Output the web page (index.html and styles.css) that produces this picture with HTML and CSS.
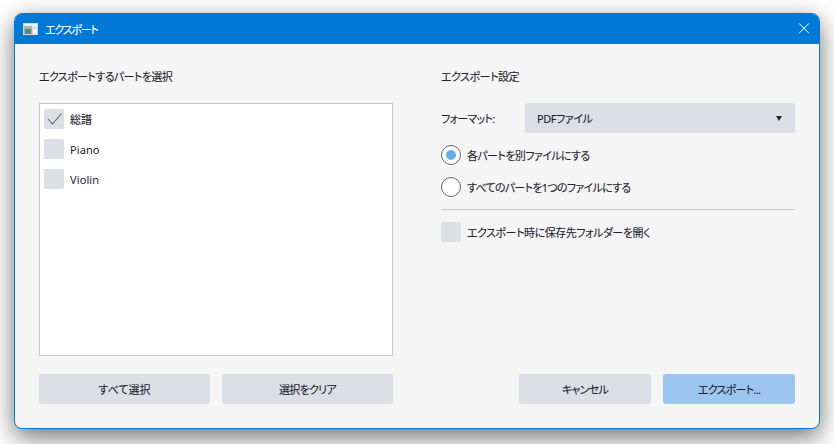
FILE: index.html
```html
<!DOCTYPE html>
<html lang="ja">
<head>
<meta charset="utf-8">
<title>エクスポート</title>
<link rel="stylesheet" href="styles.css">
</head>
<body>
<div class="window">
  <header class="titlebar">
    <svg class="app-icon" width="15" height="12" viewBox="0 0 15 12">
      <rect width="15" height="12" fill="#d3d8dc"/>
      <rect x="1" y="1" width="13" height="2" fill="#eef1f3"/>
      <rect x="1" y="3" width="8" height="8" fill="#9db8b2"/>
      <rect x="2" y="6" width="6" height="5" fill="#4f8f7c"/>
      <rect x="10" y="3" width="4" height="8" fill="#f4f7f8"/>
      <rect x="11" y="4" width="2" height="2" fill="#bcd0d8"/>
    </svg>
    <span class="title">エクスポート</span>
    <svg class="close" width="12" height="12" viewBox="0 0 12 12">
      <path d="M1 .3 11 10.3M11 .3 1 10.3" stroke="#fff" stroke-width="1" fill="none"/>
    </svg>
  </header>
  <main class="content">
    <section class="col">
      <h2 class="heading">エクスポートするパートを選択</h2>
      <div class="list">
        <label class="item plain"><span class="box">
          <svg width="20" height="20" viewBox="0 0 20 20"><path d="M4 10 8.5 15 17.5 4.5" stroke="#5d6472" stroke-width="1.1" fill="none"/></svg>
        </span>総譜</label>
        <label class="item latin"><span class="box"></span>Piano</label>
        <label class="item latin"><span class="box"></span>Violin</label>
      </div>
      <div class="actions">
        <button class="btn plain">すべて選択</button>
        <button class="btn tight">選択をクリア</button>
      </div>
    </section>
    <section class="col">
      <h2 class="heading loose">エクスポート設定</h2>
      <div class="format">
        <span class="format-label tight">フォーマット:</span>
        <div class="combo"><span class="looser">PDFファイル</span><span class="arrow"></span></div>
      </div>
      <label class="radio first"><span class="dot on"></span>各パートを別ファイルにする</label>
      <label class="radio second tight"><span class="dot"></span>すべてのパートを1つのファイルにする</label>
      <hr class="sep">
      <label class="item loose"><span class="box"></span>エクスポート時に保存先フォルダーを開く</label>
      <div class="actions end">
        <button class="btn small tight">キャンセル</button>
        <button class="btn small primary tight">エクスポート...</button>
      </div>
    </section>
  </main>
</div>
</body>
</html>
```
FILE: styles.css
```css
html, body { height: 100%; }
body {
  margin: 0;
  padding: 13px 14px 15px;
  box-sizing: border-box;
  background: #fff;
  overflow: hidden;
  font-family: "Noto Sans", "Noto Sans CJK JP", sans-serif;
  font-size: 11px;
  font-feature-settings: "palt";
  letter-spacing: -.6px;
  color: #1e2230;
  -webkit-text-stroke: 0.1px currentColor;
}
.plain { letter-spacing: 0; }
.latin { letter-spacing: .1px; -webkit-text-stroke: 0; }
.tight { letter-spacing: -.72px; }
.loose { letter-spacing: -.48px; }
.looser { letter-spacing: -.43px; }
.window {
  width: 806px;
  height: 416px;
  box-sizing: border-box;
  display: flex;
  flex-direction: column;
  border: 1px solid #0078d7;
  border-radius: 8px;
  background: #f5f5f5;
  box-shadow: 0 8px 24px rgba(0, 0, 0, .56);
  overflow: hidden;
}
.titlebar {
  height: 30px;
  flex: none;
  display: flex;
  align-items: center;
  background: #0078d7;
  color: #fff;
  padding: 0 9px 0 8px;
  gap: 7px;
}
.title { flex: 1; font-size: 11px; letter-spacing: -1.2px; }
.content {
  flex: 1;
  display: flex;
  gap: 48px;
  padding: 24px 24px 24px;
  min-height: 0;
}
.col { flex: 1; display: flex; flex-direction: column; min-width: 0; }
.heading {
  margin: 0 0 17px;
  height: 18px;
  line-height: 18px;
  font-size: 11px;
  font-weight: 400;
}
.list {
  flex: 1;
  background: #fff;
  border: 1px solid #c8c8c8;
  padding: 5px 4px;
  display: flex;
  flex-direction: column;
  gap: 10px;
}
.item { display: flex; align-items: center; gap: 6px; height: 20px; }
.box { width: 20px; height: 20px; background: #dcdfe6; border-radius: 2px; flex: none; display: block; }
.box svg { display: block; }
.actions { display: flex; gap: 12px; margin-top: 18px; }
.actions.end { margin-top: auto; justify-content: flex-end; }
.btn {
  flex: 1;
  height: 30px;
  border: 0;
  border-radius: 3px;
  background: #dcdfe6;
  color: inherit;
  font-family: inherit;
  font-size: inherit;
  font-feature-settings: inherit;
  padding: 0;
}
.btn.small { flex: 0 0 132px; }
.btn.primary { background: #9cc6ef; }
.format { display: flex; align-items: center; height: 30px; }
.format-label { width: 84px; flex: none; }
.combo {
  flex: 1;
  height: 30px;
  background: #dcdfe6;
  border-radius: 3px;
  display: flex;
  align-items: center;
  justify-content: space-between;
  padding: 0 13px 0 12px;
}
.arrow {
  width: 0; height: 0;
  border-left: 3px solid transparent;
  border-right: 3px solid transparent;
  border-top: 5px solid #232733;
}
.radio { display: flex; align-items: center; gap: 6px; height: 20px; }
.radio.first { margin-top: 12px; }
.radio.second { margin-top: 12px; }
.dot {
  width: 20px; height: 20px;
  box-sizing: border-box;
  border: 1.5px solid #5f6472;
  border-radius: 50%;
  background: #fff;
  flex: none;
  display: flex;
  align-items: center;
  justify-content: center;
}
.dot.on::after {
  content: "";
  width: 10px; height: 10px;
  border-radius: 50%;
  background: #6aade9;
}
.sep { border: 0; border-top: 1px solid #c8c8c8; margin: 12px 0; width: 100%; }
```
